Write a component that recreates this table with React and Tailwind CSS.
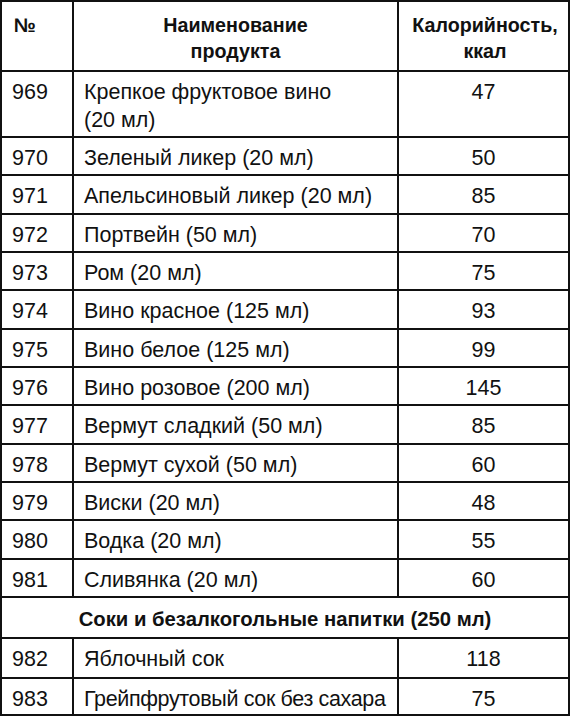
// App.jsx
const rows = [
  ["969", ["Крепкое фруктовое вино", "(20 мл)"], "47"],
  ["970", ["Зеленый ликер (20 мл)"], "50"],
  ["971", ["Апельсиновый ликер (20 мл)"], "85"],
  ["972", ["Портвейн (50 мл)"], "70"],
  ["973", ["Ром (20 мл)"], "75"],
  ["974", ["Вино красное (125 мл)"], "93"],
  ["975", ["Вино белое (125 мл)"], "99"],
  ["976", ["Вино розовое (200 мл)"], "145"],
  ["977", ["Вермут сладкий (50 мл)"], "85"],
  ["978", ["Вермут сухой (50 мл)"], "60"],
  ["979", ["Виски (20 мл)"], "48"],
  ["980", ["Водка (20 мл)"], "55"],
  ["981", ["Сливянка (20 мл)"], "60"],
]

const juices = [
  ["982", "Яблочный сок", "118", "h-[40px]"],
  ["983", "Грейпфрутовый сок без сахара", "75", "h-[37px]"],
]

function Row({ num, name, kcal, height }) {
  // long names get a bit tighter so they don't hit the column line
  const tight = name[0].length > 26
  return (
    <div className={`grid grid-cols-[70px_325px_1fr] border-t-2 border-[#111] ${height}`}>
      <div className="pl-[10px] pt-[6px]">{num}</div>
      <div
        className={`border-l-2 border-[#111] pl-[10px] pt-[6px] whitespace-nowrap ${tight ? "tracking-[-0.35px]" : ""}`}
      >
        {name.map((line) => (
          <div key={line}>{line}</div>
        ))}
      </div>
      <div className="border-l-2 border-[#111] pt-[6px] text-center">{kcal}</div>
    </div>
  )
}

export default function App() {
  return (
    <div className="w-[570px] h-[716px] bg-white">
      <div
        className="border-2 border-[#111] text-[21.5px] leading-[28px] text-[#111]"
        style={{ fontFamily: '"Liberation Sans", Arial, sans-serif' }}
      >
        {/* Header */}
        <div className="grid grid-cols-[70px_325px_1fr] h-[68px] font-bold leading-[26px] text-[19.7px]">
          <div className="pl-[12px] pt-[10px]">№</div>
          <div className="border-l-2 border-[#111] pt-[10px] text-center">
            <div>Наименование</div>
            <div>продукта</div>
          </div>
          <div className="border-l-2 border-[#111] pt-[10px] pl-[3px] text-center">
            <div>Калорийность,</div>
            <div>ккал</div>
          </div>
        </div>

        {rows.map(([num, name, kcal], i) => (
          <Row key={num} num={num} name={name} kcal={kcal} height={i === 0 ? "h-[66px]" : "h-[38.33px]"} />
        ))}

        {/* Section */}
        <div className="border-t-2 border-[#111] h-[41px] pt-[7px] text-center font-bold text-[20.3px]">
          Соки и безалкогольные напитки (250 мл)
        </div>

        {juices.map(([num, name, kcal, h]) => (
          <Row key={num} num={num} name={[name]} kcal={kcal} height={h} />
        ))}
      </div>
    </div>
  )
}
